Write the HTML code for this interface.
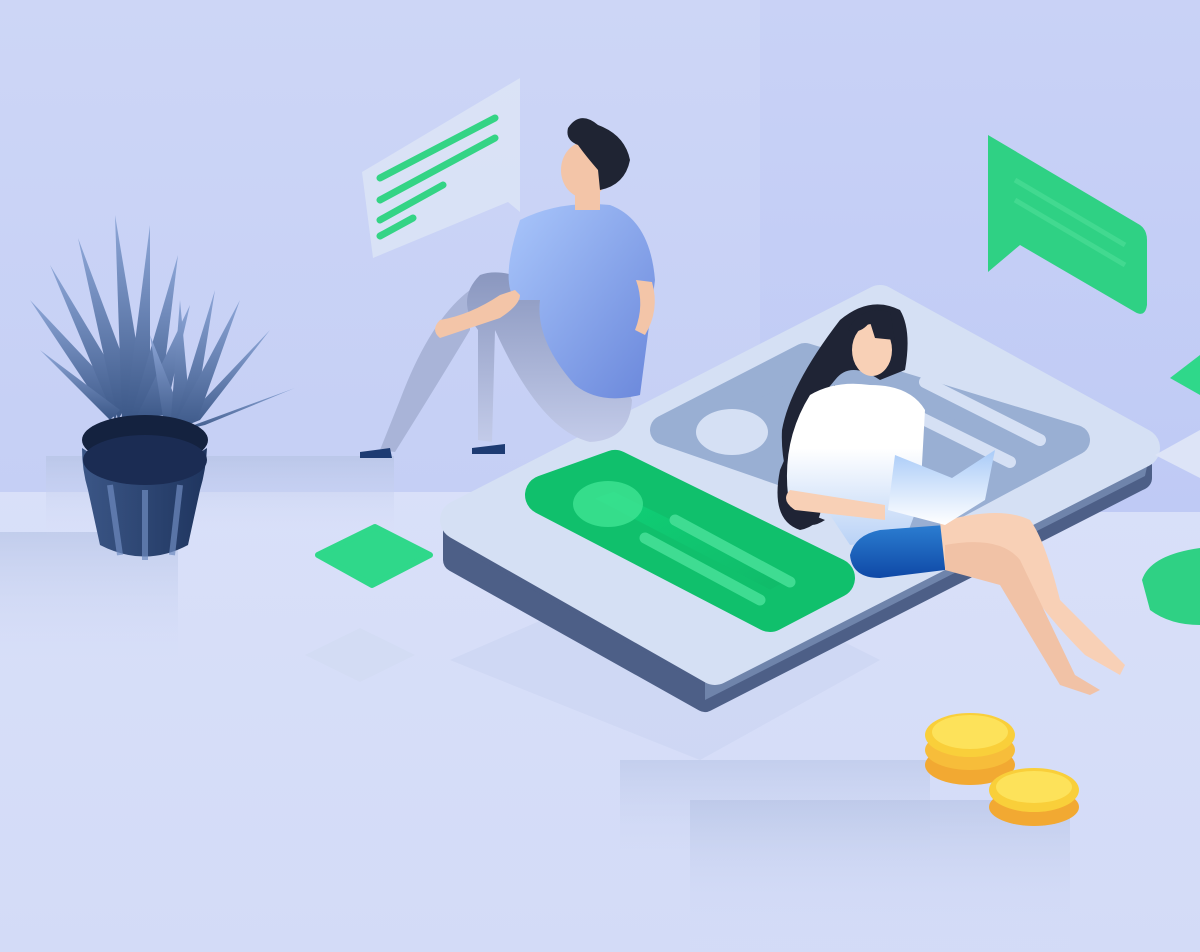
<!DOCTYPE html>
<html><head><meta charset="utf-8"><style>
html,body{margin:0;padding:0;width:1200px;height:952px;overflow:hidden;background:#d6ddf8}
svg{display:block}
</style></head><body>
<svg width="1200" height="952" viewBox="0 0 1200 952" xmlns="http://www.w3.org/2000/svg">
<defs>
<linearGradient id="wallL" x1="0" y1="0" x2="0" y2="1"><stop offset="0" stop-color="#cdd6f6"/><stop offset="1" stop-color="#c5cff5"/></linearGradient>
<linearGradient id="wallR" x1="0" y1="0" x2="0" y2="1"><stop offset="0" stop-color="#c9d2f6"/><stop offset="1" stop-color="#bfcaf5"/></linearGradient>
<linearGradient id="floor" x1="0" y1="0" x2="0" y2="1"><stop offset="0" stop-color="#dfe5fb"/><stop offset="1" stop-color="#d3dbf7"/></linearGradient>
<linearGradient id="green" x1="0" y1="0" x2="1" y2="1"><stop offset="0" stop-color="#0fd67a"/><stop offset="1" stop-color="#10b566"/></linearGradient>
<linearGradient id="shirt" x1="0" y1="0" x2="1" y2="1"><stop offset="0" stop-color="#a9c6fb"/><stop offset="1" stop-color="#6a87db"/></linearGradient>
<linearGradient id="legs" x1="0" y1="0" x2="0" y2="1"><stop offset="0" stop-color="#8a97bf"/><stop offset="1" stop-color="#c3cbe9"/></linearGradient>
<linearGradient id="wshirt" x1="0" y1="0" x2="0" y2="1"><stop offset="0.4" stop-color="#ffffff"/><stop offset="1" stop-color="#b9d2f6"/></linearGradient>
<linearGradient id="shorts" x1="0" y1="0" x2="0" y2="1"><stop offset="0" stop-color="#2b7dd1"/><stop offset="1" stop-color="#0f49a6"/></linearGradient>
<linearGradient id="pot" x1="0" y1="0" x2="1" y2="0"><stop offset="0" stop-color="#3b5686"/><stop offset="1" stop-color="#1f355f"/></linearGradient>
<linearGradient id="block" x1="0" y1="0" x2="0" y2="1"><stop offset="0" stop-color="#b8c5e6"/><stop offset="1" stop-color="#d8dff9" stop-opacity="0"/></linearGradient>
<linearGradient id="leaf" x1="0" y1="0" x2="0" y2="1"><stop offset="0" stop-color="#8ea7d8"/><stop offset="1" stop-color="#3b5787"/></linearGradient>
<linearGradient id="book" x1="0" y1="0" x2="0" y2="1"><stop offset="0" stop-color="#a9cbf8"/><stop offset="1" stop-color="#ffffff"/></linearGradient>
</defs>
<rect width="1200" height="952" fill="url(#floor)"/>
<rect x="0" y="0" width="760" height="492" fill="url(#wallL)"/>
<rect x="760" y="0" width="440" height="512" fill="url(#wallR)"/>
<rect x="0" y="532" width="178" height="140" fill="url(#block)" opacity="0.7"/>
<rect x="46" y="456" width="348" height="80" fill="url(#block)" opacity="0.8"/>
<rect x="620" y="760" width="310" height="120" fill="url(#block)" opacity="0.6"/>
<rect x="690" y="800" width="380" height="152" fill="url(#block)" opacity="0.7"/>
<polygon points="450,660 680,560 880,660 700,760" fill="#c8d2ef" opacity="0.5"/>
<!-- phone side -->
<path d="M455,525 L455,560 L705,700 L1140,478 L1140,450 Z" fill="#4d5f87" stroke="#4d5f87" stroke-width="24" stroke-linejoin="round"/>
<path d="M705,700 L1145,476 L1150,452 L705,680Z" fill="#6f84ab"/>
<polygon points="460,520 880,305 1140,448 715,665" fill="#d5e0f4" stroke="#d5e0f4" stroke-width="40" stroke-linejoin="round"/>
<polygon points="665,430 805,358 1075,440 925,520" fill="#99afd3" stroke="#99afd3" stroke-width="30" stroke-linejoin="round"/>
<ellipse cx="732" cy="432" rx="36" ry="23" fill="#d5e0f4"/>
<line x1="925" y1="382" x2="1040" y2="440" stroke="#d5e0f4" stroke-width="12" stroke-linecap="round"/>
<line x1="895" y1="405" x2="1010" y2="462" stroke="#d5e0f4" stroke-width="12" stroke-linecap="round"/>
<polygon points="545,495 615,470 835,578 770,612" fill="url(#green)" stroke="#10c06c" stroke-width="40" stroke-linejoin="round"/>
<ellipse cx="608" cy="504" rx="35" ry="23" fill="#3ee394" opacity="0.8"/>
<line x1="675" y1="520" x2="790" y2="582" stroke="#3fdc92" stroke-width="11" stroke-linecap="round"/>
<line x1="645" y1="538" x2="760" y2="600" stroke="#3fdc92" stroke-width="11" stroke-linecap="round"/>
<polygon points="362,172 520,78 520,212 508,202 373,258" fill="#dfe8f6" opacity="0.7"/>
<line x1="380" y1="178" x2="495" y2="118" stroke="#34d485" stroke-width="7" stroke-linecap="round"/>
<line x1="380" y1="200" x2="495" y2="138" stroke="#34d485" stroke-width="7" stroke-linecap="round"/>
<line x1="380" y1="220" x2="443" y2="185" stroke="#34d485" stroke-width="7" stroke-linecap="round"/>
<line x1="380" y1="236" x2="413" y2="218" stroke="#34d485" stroke-width="7" stroke-linecap="round"/>
<path d="M988,135 L1140,225 Q1147,230 1147,240 L1147,305 Q1145,318 1135,312 L1020,245 L988,272 Z" fill="#2fd184"/>
<line x1="1015" y1="180" x2="1125" y2="245" stroke="#4fdf98" stroke-width="5" opacity="0.6"/>
<line x1="1015" y1="200" x2="1125" y2="265" stroke="#4fdf98" stroke-width="5" opacity="0.6"/>
<polygon points="318,555 375,527 430,555 372,585" fill="#2fd88a" stroke="#2fd88a" stroke-width="6" stroke-linejoin="round"/>
<polygon points="305,655 360,628 415,655 360,682" fill="#d3dcf4"/>
<polygon points="1170,378 1200,355 1200,395" fill="#2fd88a"/>
<path d="M1142,580 Q1150,555 1200,548 L1200,625 Q1170,625 1150,610 Z" fill="#2fd184"/>
<polygon points="1155,455 1200,430 1200,478" fill="#dde4f7"/>
<!-- man -->
<path d="M470,290 Q430,320 400,400 L380,450 L395,452 Q440,380 470,330 Z" fill="#a9b4d8"/>
<path d="M480,275 Q455,300 478,330 L478,440 L492,442 L495,330 Q540,430 590,442 Q630,440 632,400 L600,330 Q520,260 480,275Z" fill="url(#legs)"/>
<path d="M520,220 Q560,200 610,205 Q650,220 655,280 L640,395 Q600,405 575,385 Q535,340 540,300 L515,300 Q500,280 520,220Z" fill="url(#shirt)"/>
<path d="M515,290 L500,295 Q470,315 440,320 Q430,330 440,338 L500,318 Q520,305 520,295Z" fill="#f3c5a8"/>
<path d="M636,280 L652,282 Q660,310 645,335 L635,330 Q645,305 636,280Z" fill="#f3c5a8"/>
<rect x="575" y="185" width="25" height="25" fill="#f3c5a8"/>
<ellipse cx="585" cy="170" rx="24" ry="28" fill="#f3c5a8"/>
<path d="M568,128 Q580,110 598,125 Q625,135 630,160 Q625,185 600,190 L598,170 Q585,155 578,145 Q565,140 568,128Z" fill="#1f2433"/>
<path d="M360,452 L390,448 L392,458 L360,458Z" fill="#1d3b73"/>
<path d="M472,448 L505,444 L505,454 L472,454Z" fill="#1d3b73"/>
<!-- woman -->
<path d="M840,320 Q870,295 900,310 Q912,330 905,370 L880,380 Q850,360 835,380 Q800,420 790,470 L800,520 Q810,530 825,520 L800,510 Q780,470 782,430 Q790,385 840,320Z" fill="#1f2435"/>
<path d="M835,385 Q805,410 780,470 Q770,520 800,530 Q825,525 820,500" fill="#1f2435"/>
<ellipse cx="872" cy="350" rx="20" ry="26" fill="#f8d0b6"/>
<path d="M848,330 Q860,305 890,312 L895,340 L875,338 L870,322 Q860,335 848,330Z" fill="#1f2435"/>
<path d="M810,395 Q835,380 870,385 Q910,385 925,410 L920,500 L905,540 L850,545 L830,515 L788,495 Q782,440 810,395Z" fill="url(#wshirt)"/>
<path d="M850,555 Q855,535 880,530 L945,525 L945,570 L880,578 Q852,578 850,555Z" fill="url(#shorts)"/>
<path d="M940,522 Q1000,505 1030,520 Q1045,540 1060,600 L1125,665 L1120,675 L1085,655 Q1030,600 1010,555 Q980,560 945,568Z" fill="#f8d0b6"/>
<path d="M945,545 Q1000,535 1020,560 L1075,675 L1100,690 L1090,695 L1060,685 L1000,585 L945,570Z" fill="#f1c2a6"/>
<path d="M790,490 L885,505 L885,520 L795,510 Q780,500 790,490Z" fill="#f8d0b6"/>
<path d="M895,455 L952,478 L995,450 L985,500 L945,525 L888,510Z" fill="url(#book)"/>
<!-- plant -->
<g fill="url(#leaf)">
<path d="M110,420 L30,300 L115,390Z"/><path d="M115,420 L50,265 L125,390Z"/><path d="M118,420 L78,238 L135,390Z"/>
<path d="M122,420 L115,215 L145,395Z"/><path d="M125,420 L150,225 L150,405Z"/><path d="M130,420 L178,255 L160,405Z"/>
<path d="M135,420 L190,305 L165,415Z"/><path d="M110,420 L40,350 L120,410Z"/>
<path d="M165,430 L150,335 L180,410Z"/><path d="M170,430 L180,300 L190,410Z"/><path d="M172,430 L215,290 L195,415Z"/>
<path d="M175,430 L270,330 L200,420Z"/><path d="M175,432 L295,388 L205,425Z"/><path d="M170,432 L240,300 L198,418Z"/>
</g>
<ellipse cx="145" cy="440" rx="63" ry="25" fill="#14223f"/>
<path d="M82,448 Q82,470 88,490 L100,545 Q145,568 188,545 L200,490 Q206,470 207,448 Q145,490 82,448Z" fill="url(#pot)"/>
<g stroke="#6f8bc0" stroke-width="6" opacity="0.7"><line x1="110" y1="485" x2="120" y2="555"/><line x1="145" y1="490" x2="145" y2="560"/><line x1="180" y1="485" x2="172" y2="555"/></g>
<ellipse cx="145" cy="460" rx="62" ry="25" fill="#1b2c53"/>
<g>
<ellipse cx="970" cy="765" rx="45" ry="20" fill="#f2a932"/>
<ellipse cx="970" cy="750" rx="45" ry="20" fill="#f7bd3a"/>
<ellipse cx="970" cy="735" rx="45" ry="22" fill="#f9cf3a"/>
<ellipse cx="970" cy="732" rx="38" ry="17" fill="#fde25a"/>
<ellipse cx="1034" cy="807" rx="45" ry="19" fill="#f2a932"/>
<ellipse cx="1034" cy="790" rx="45" ry="22" fill="#f9cf3a"/>
<ellipse cx="1034" cy="787" rx="38" ry="16" fill="#fde25a"/>
</g>
</svg>
</body></html>
